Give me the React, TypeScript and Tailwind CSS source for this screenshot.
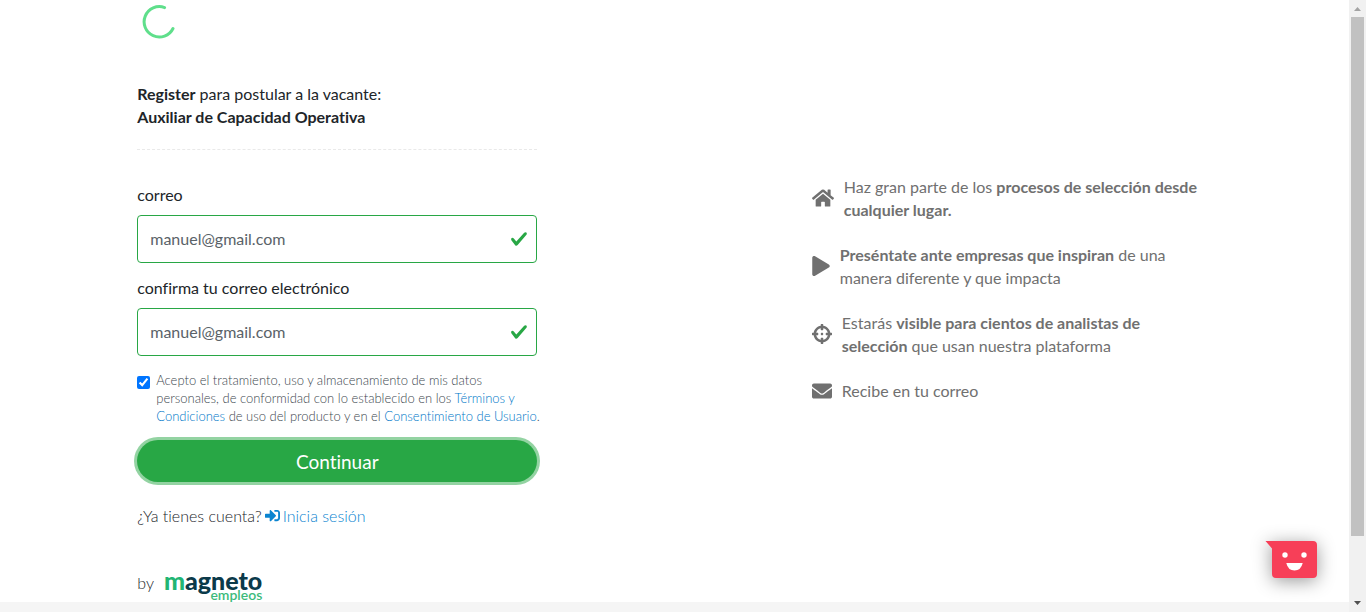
import type { ReactNode } from 'react';
import { FaCrosshairs, FaEnvelope, FaHome, FaPlay, FaSignInAlt } from 'react-icons/fa';

function Spinner() {
  return (
    <svg className="mt-1 ml-1 size-9" viewBox="0 0 36 36" fill="none" role="img" aria-label="Cargando">
      <path d="M23.6 3.6A15.2 15.2 0 1 0 32 24.5" stroke="#5fdf8b" strokeWidth="3" strokeLinecap="round" />
    </svg>
  );
}

function EmailField({ id, label }: { id: string; label: string }) {
  return (
    <div>
      <label htmlFor={id} className="block">
        {label}
      </label>
      <div className="relative mt-[9px]">
        <input
          id={id}
          type="email"
          defaultValue="manuel@gmail.com"
          className="block h-12 w-full rounded border border-[#28a745] bg-white pr-12 pb-0.5 pl-3 text-[#5a6268] outline-none"
        />
        <svg
          className="pointer-events-none absolute top-[15px] right-[9px] size-[18px]"
          viewBox="0 0 8 8"
          fill="#28a745"
          aria-hidden="true"
        >
          <path d="M2.3 6.73L.6 4.53c-.4-1.04.46-1.4 1.1-.8l1.1 1.4 3.4-3.8c.6-.63 1.6-.27 1.2.7l-4 4.6c-.43.5-.8.4-1.1.1z" />
        </svg>
      </div>
    </div>
  );
}

function Benefit({ icon, children }: { icon: ReactNode; children: ReactNode }) {
  return (
    <li className="flex items-center gap-2.5">
      <span className="shrink-0">{icon}</span>
      <p className="max-w-[366px]">{children}</p>
    </li>
  );
}

function MagnetoLogo() {
  return (
    <a href="#magneto" className="flex flex-col items-end">
      <span className="text-[25px] leading-[18px] font-black text-[#0b3a4a]">
        <span className="text-[#21b573]">m</span>agneto
      </span>
      <span className="text-sm leading-3 font-semibold text-[#3dbb7c]">empleos</span>
    </a>
  );
}

function ChatButton() {
  return (
    <button
      type="button"
      aria-label="Abrir chat"
      className="fixed right-12 bottom-[33px] drop-shadow-[0_3px_9px_rgba(0,0,0,0.4)]"
    >
      <svg className="h-[39px] w-[53px]" viewBox="0 0 53 39" aria-hidden="true">
        <path d="M0.5 1H48Q52 1 52 5V34Q52 38 48 38H11Q7 38 7 34V8.5Z" fill="#f73f58" />
        <circle cx="20" cy="15" r="2.7" fill="#fff" />
        <circle cx="39" cy="15" r="2.7" fill="#fff" />
        <path d="M21.3 23H37.7Q36 30.5 29.5 30.5Q23 30.5 21.3 23Z" fill="#fff" />
      </svg>
    </button>
  );
}

function ScrollRail() {
  return (
    <div className="fixed inset-y-0 right-0 flex w-[17px] flex-col items-center bg-[#f1f1f1]" aria-hidden="true">
      <svg className="size-[17px]" viewBox="0 0 17 17">
        <path d="M5 11L8.5 7L12 11Z" fill="#a3a3a3" />
      </svg>
      <div className="w-[13px] grow bg-[#c1c1c1]" />
      <div className="h-[59px]" />
      <svg className="size-[17px]" viewBox="0 0 17 17">
        <path d="M5 6L8.5 10L12 6Z" fill="#505050" />
      </svg>
    </div>
  );
}

export default function App() {
  return (
    <div className="flex min-h-screen flex-col bg-white pr-[17px] font-['Lato',sans-serif] text-base leading-[23px] text-[#212529] [font-variant-ligatures:no-common-ligatures]">
      <main className="grid grow grid-cols-2">
        <section className="mx-auto w-full max-w-[400px]">
          <Spinner />
          <header className="mt-[42px] border-b border-dashed border-[#e9e9e9] pb-[21px]">
            <p>
              <strong>Register</strong> para postular a la vacante:
            </p>
            <h1 className="font-bold">Auxiliar de Capacidad Operativa</h1>
          </header>

          <form className="mt-[33px]" onSubmit={(event) => event.preventDefault()}>
            <div className="flex flex-col gap-[13px]">
              <EmailField id="correo" label="correo" />
              <EmailField id="confirma" label="confirma tu correo electrónico" />
            </div>
            <div className="mt-[15px] -mr-3 flex items-start gap-1.5 text-[13px] leading-[18px] font-light text-[#40484f]">
              <input
                id="acepto"
                type="checkbox"
                defaultChecked
                className="mt-[5px] size-[13px] shrink-0 accent-[#0075ff]"
              />
              <label htmlFor="acepto">
                Acepto el tratamiento, uso y almacenamiento de mis datos
                <br />
                personales, de conformidad con lo establecido en los{' '}
                <a href="#terminos" className="text-[#0078c8]">
                  Términos y Condiciones
                </a>{' '}
                de uso del producto y en el{' '}
                <a href="#consentimiento" className="text-[#0078c8]">
                  Consentimiento de Usuario
                </a>
                .
              </label>
            </div>
            <button
              type="submit"
              className="mt-[15px] block h-[42px] w-full rounded-full bg-[#28a745] text-[19px] text-white ring-3 ring-[#93d3a2]"
            >
              Continuar
            </button>
          </form>

          <p className="mt-[22px] flex items-center gap-[3px] font-light">
            ¿Ya tienes cuenta?
            <a href="#ingresar" className="flex items-center gap-[3px] text-[#0a84d0]">
              <FaSignInAlt className="size-[15px]" />
              Inicia sesión
            </a>
          </p>
          <div className="mt-11 flex items-start gap-2.5 font-light">
            by
            <MagnetoLogo />
          </div>
        </section>

        <section className="mx-auto w-full max-w-[400px] pt-[175px] text-[#707070]">
          <ul className="flex flex-col gap-[22px]">
            <Benefit icon={<FaHome className="size-[22px]" />}>
              Haz gran parte de los <strong>procesos de selección desde cualquier lugar.</strong>
            </Benefit>
            <Benefit icon={<FaPlay className="h-5 w-[18px]" />}>
              <strong>Preséntate ante empresas que inspiran</strong> de una manera diferente y que impacta
            </Benefit>
            <Benefit icon={<FaCrosshairs className="size-5" />}>
              Estarás <strong>visible para cientos de analistas de selección</strong> que usan nuestra plataforma
            </Benefit>
            <Benefit icon={<FaEnvelope className="size-5" />}>Recibe en tu correo</Benefit>
          </ul>
        </section>
      </main>
      <footer className="h-2.5 bg-[#f5f5f5]" />
      <ChatButton />
      <ScrollRail />
    </div>
  );
}
